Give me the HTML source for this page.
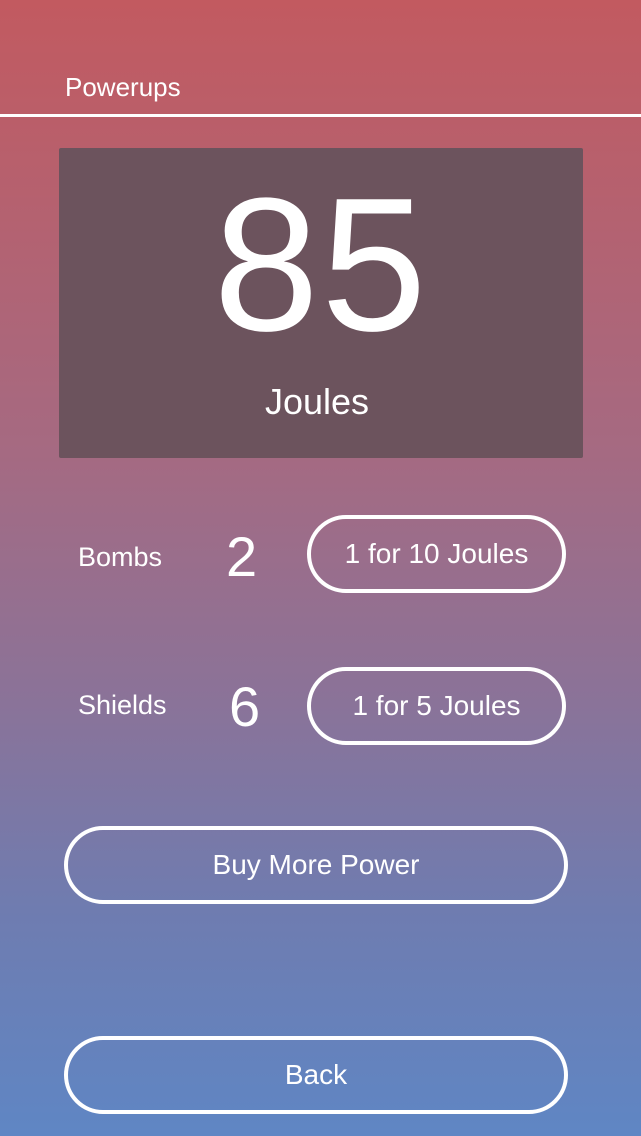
<!DOCTYPE html>
<html><head><style>
body{margin:0;width:641px;height:1136px;overflow:hidden;font-family:"Liberation Sans",sans-serif;color:#fff;
background:linear-gradient(180deg,#c25a60 0%,#a56a82 40%,#8a7399 62%,#6f7cb0 80%,#5f86c4 100%);position:relative}
.a{position:absolute}
.btn{position:absolute;border:4px solid #fff;border-radius:40px;box-sizing:border-box;text-align:center;font-size:28px}
</style></head><body>
<div class="a" style="left:65px;top:72px;font-size:26px">Powerups</div>
<div class="a" style="left:0;top:114px;width:641px;height:3px;background:#fff"></div>
<div class="a" style="left:59px;top:148px;width:524px;height:310px;background:#6c535d;border-radius:2px"></div>
<div class="a" style="left:59px;top:165px;width:524px;text-align:center;font-size:190px;line-height:200px;font-weight:300;letter-spacing:2px">85</div>
<div class="a" style="left:55px;top:381px;width:524px;text-align:center;font-size:36px">Joules</div>
<div class="a" style="left:78px;top:542px;font-size:27px">Bombs</div>
<div class="a" style="left:226px;top:524px;font-size:56px">2</div>
<div class="btn" style="left:307px;top:515px;width:259px;height:78px;line-height:70px">1 for 10 Joules</div>
<div class="a" style="left:78px;top:690px;font-size:27px">Shields</div>
<div class="a" style="left:229px;top:674px;font-size:56px">6</div>
<div class="btn" style="left:307px;top:667px;width:259px;height:78px;line-height:70px">1 for 5 Joules</div>
<div class="btn" style="left:64px;top:826px;width:504px;height:78px;line-height:70px">Buy More Power</div>
<div class="btn" style="left:64px;top:1036px;width:504px;height:78px;line-height:70px">Back</div>
</body></html>
